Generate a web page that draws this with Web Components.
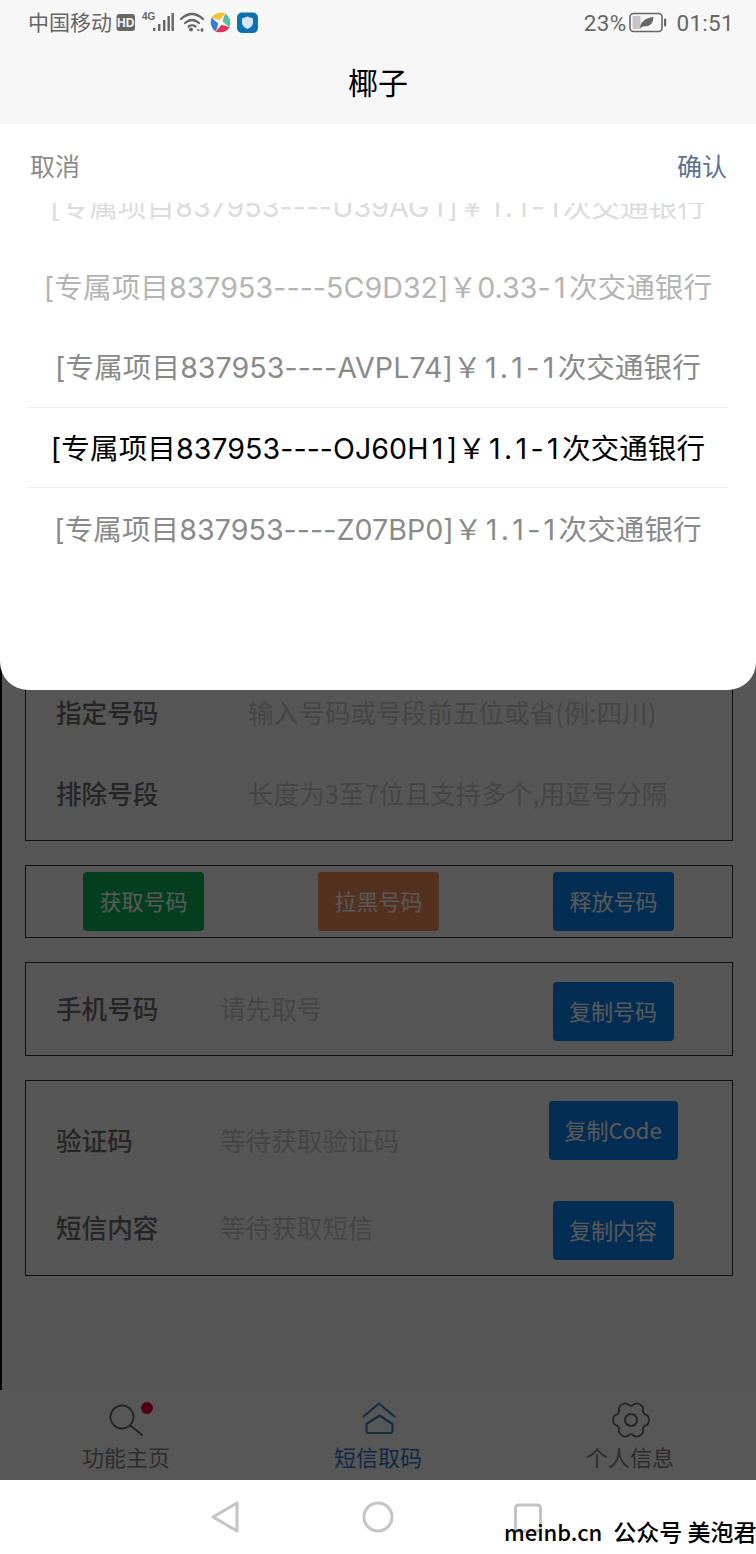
<!DOCTYPE html>
<html lang="zh">
<head>
<meta charset="utf-8">
<title>椰子</title>
<style>
  html, body { margin: 0; height: 100%; }
  body { font-family: "Noto Sans CJK SC", "Noto Sans", sans-serif; background: #fff; overflow: hidden; }
</style>
</head>
<body>
<app-shell>
  <status-bar></status-bar>
  <title-bar>椰子</title-bar>
  <main-area>
    <form-page>
      <form-card style="--card-height:688px;--card-justify:flex-end;--card-padding:0 0 7px">
        <form-row label="指定号码" value-col="192px" placeholder="输入号码或号段前五位或省(例:四川)"></form-row>
        <form-row label="排除号段" value-col="192px" placeholder="长度为3至7位且支持多个,用逗号分隔"></form-row>
      </form-card>
      <form-card style="--card-height:71px;--card-justify:center">
        <action-bar>
          <action-btn tone="green">获取号码</action-btn>
          <action-btn tone="orange">拉黑号码</action-btn>
          <action-btn tone="blue">释放号码</action-btn>
        </action-bar>
      </form-card>
      <form-card style="--card-height:73px;--card-padding:19px 0 0">
        <form-row label="手机号码" placeholder="请先取号" shift="-8"><action-btn tone="blue">复制号码</action-btn></form-row>
      </form-card>
      <form-card style="--card-height:174px;--card-padding:20px 0 0;--card-gap:41px">
        <form-row label="验证码" placeholder="等待获取验证码" shift="18"><action-btn tone="blue" wide>复制Code</action-btn></form-row>
        <form-row label="短信内容" placeholder="等待获取短信" shift="-8"><action-btn tone="blue">复制内容</action-btn></form-row>
      </form-card>
    </form-page>
    <tab-bar>
      <tab-item label="功能主页" icon="search" dot></tab-item>
      <tab-item label="短信取码" icon="home" active></tab-item>
      <tab-item label="个人信息" icon="gear"></tab-item>
    </tab-bar>
    <picker-sheet>
      <picker-row level="3">[专属项目837953----U39AG1]￥1.1-1次交通银行</picker-row>
      <picker-row level="2">[专属项目837953----5C9D32]￥0.33-1次交通银行</picker-row>
      <picker-row level="1">[专属项目837953----AVPL74]￥1.1-1次交通银行</picker-row>
      <picker-row level="0">[专属项目837953----OJ60H1]￥1.1-1次交通银行</picker-row>
      <picker-row level="1">[专属项目837953----Z07BP0]￥1.1-1次交通银行</picker-row>
    </picker-sheet>
  </main-area>
  <system-nav></system-nav>
</app-shell>

<script>
function define(name, css, html) {
  class El extends HTMLElement {
    constructor() {
      super();
      this.root = this.attachShadow({ mode: 'open' });
      this.root.innerHTML = `<style>${css}</style>${typeof html === 'function' ? html(this) : html}`;
    }
  }
  customElements.define(name, El);
}

// six flat-topped lobes, soft notches between them
function gearPath(cx, cy, outer, inner) {
  const pt = (deg, r) => {
    const a = deg * Math.PI / 180;
    return `${(cx + r * Math.cos(a)).toFixed(1)} ${(cy + r * Math.sin(a)).toFixed(1)}`;
  };
  let d = `M${pt(22, inner)}`;
  for (let i = 0; i < 6; i++) {
    const n = 30 + 60 * i;
    d += ` Q${pt(n, inner - 1.5)} ${pt(n + 8, inner)}`;
    d += ` C${pt(n + 16, outer * 1.1)} ${pt(n + 44, outer * 1.1)} ${pt(n + 52, inner)}`;
  }
  return d + ' Z';
}

const petal = 'M-7 -7.500 Q0 -12.500 7.500 -7 Q3.500 -5 0 -2.500 Q-4 -4 -7 -7.500 Z';

define('app-shell', `
  :host { display: flex; flex-direction: column; height: 1554px; width: 756px; overflow: hidden; position: relative; }
`, `<slot></slot>`);

define('status-bar', `
  :host { display: flex; align-items: center; justify-content: space-between; height: 50px; padding: 0 22px 4px 28px; box-sizing: border-box;
    background: #f7f7f7; color: #666; font-size: 21px; line-height: 24px; }
  .side { display: flex; align-items: center; }
  svg { display: block; }
  .carrier { position: relative; top: -2px; }
  .num { font-family: "Roboto", sans-serif; font-size: 22.5px; letter-spacing: .3px; }
`, `
  <div class="side">
    <span class="carrier">中国移动</span>
    <svg width="146" height="24" viewBox="0 0 146 24" style="margin-left:4px">
      <rect x="0.500" y="3" width="18.500" height="17" rx="3" fill="#666"/>
      <text x="9.700" y="16" font-size="12" font-weight="700" font-family="Liberation Sans" fill="#f7f7f7" text-anchor="middle">HD</text>
      <text x="26" y="9" font-size="10" font-weight="700" font-family="Liberation Sans" fill="#666">4G</text>
      <g fill="#666">
        <rect x="37" y="17" width="2.400" height="3"/>
        <rect x="42" y="13" width="2.400" height="7"/>
        <rect x="47" y="9" width="2.400" height="11"/>
        <rect x="51.500" y="5" width="2.400" height="15"/>
        <rect x="55.500" y="2" width="2.400" height="18"/>
      </g>
      <g fill="none" stroke="#666" stroke-width="2.200" stroke-linecap="round">
        <path d="M65 8 Q76 -2 87 8"/>
        <path d="M69 12 Q76 6 83 12"/>
        <path d="M72.500 15.500 Q76 13 79.500 15.500"/>
      </g>
      <circle cx="75" cy="18.500" r="2" fill="#666"/>
      <path d="M81 19h2.500M86 17v4M84.500 19h3" stroke="#666" stroke-width="1.500"/>
      <g transform="translate(104.500 11.500) rotate(-18)">
        <path d="${petal}" fill="#f2c230"/>
        <path transform="rotate(90)" d="${petal}" fill="#52c3a0"/>
        <path transform="rotate(180)" d="${petal}" fill="#e0305c"/>
        <path transform="rotate(270)" d="${petal}" fill="#2f7fd6"/>
      </g>
      <rect x="121" y="1.500" width="21" height="20.500" rx="5" fill="#0f70b6"/>
      <path d="M131.500 5.500 L137 7.500 V11.500 Q137 15.500 131.500 18 Q126 15.500 126 11.500 V7.500 Z" fill="#d3e7f5"/>
    </svg>
  </div>
  <div class="side">
    <span class="num">23%</span>
    <svg width="38" height="22" viewBox="0 0 38 22" style="margin:0 9px 0 3px">
      <rect x="1" y="1.500" width="32" height="18" rx="3.500" fill="none" stroke="#666" stroke-width="1.600"/>
      <rect x="3.500" y="4" width="8" height="13" fill="#c6c6c6"/>
      <path d="M11 16.500 Q11 7 24.500 5 Q24.500 15 14 14.500 Q12.500 15 11 16.500 Z" fill="#666"/>
      <rect x="35" y="6.500" width="2.200" height="8" rx="1" fill="#666"/>
    </svg>
    <span class="num">01:51</span>
  </div>
`);

define('title-bar', `
  :host { display: flex; align-items: center; justify-content: center; height: 74px; padding-bottom: 12px; box-sizing: border-box;
    background: #f7f7f7; color: #000; font-size: 30px; }
`, `<slot></slot>`);

define('main-area', `
  :host { display: flex; flex-direction: column; flex: 1; position: relative; min-height: 0; background: #f7f7f7; }
`, `<slot></slot>`);

define('form-page', `
  :host { display: flex; flex-direction: column; gap: 24px; height: 1266px; padding: 20px 23px 0 25px; box-sizing: border-box; border-left: 2px solid #111; }
  ::slotted(form-card) { margin-left: -2px; }
`, `<slot></slot>`);

define('form-card', `
  :host { display: flex; flex-direction: column; justify-content: var(--card-justify, flex-start); gap: var(--card-gap, 0);
    height: var(--card-height); padding: var(--card-padding, 0); border: 1px solid #333; box-sizing: content-box; }
`, `<slot></slot>`);

define('form-row', `
  :host { display: grid; grid-template-columns: 30px 164px 1fr; align-items: center; font-size: 25.6px; }
  :host(:not([has-btn])) { height: 81px; }
  .label { grid-column: 2; color: #6e6e6e; font-weight: 500; white-space: nowrap; }
  .value { color: #c6c6c6; white-space: nowrap; }
  .tail { display: flex; justify-content: center; width: 238px; }
  .wrap { display: flex; align-items: center; justify-content: space-between; }
`, (el) => {
  const shift = Number(el.getAttribute('shift') || 0);
  const offset = shift > 0 ? `margin-top:${shift}px` : shift < 0 ? `margin-bottom:${-shift}px` : '';
  const valueCol = el.getAttribute('value-col');
  const indent = valueCol ? `margin-left:${parseInt(valueCol) - 164}px` : '';
  if (el.children.length) el.setAttribute('has-btn', '');
  return `
    <span class="label" style="${offset}">${el.getAttribute('label')}</span>
    <div class="wrap">
      <span class="value" style="${offset};${indent}">${el.getAttribute('placeholder')}</span>
      <div class="tail"><slot></slot></div>
    </div>`;
});

define('action-bar', `
  :host { display: grid; grid-template-columns: repeat(3, 1fr); justify-items: center; margin-right: 1px; }
`, `<slot></slot>`);

define('action-btn', `
  :host { display: inline-flex; align-items: center; justify-content: center; width: 121px; height: 59px; padding-bottom: 4px; box-sizing: border-box;
    border-radius: 4px; font-size: 22px; color: #fff; background: #0c82f0; white-space: nowrap; }
  :host([wide]) { width: 129px; }
  :host([tone="green"]) { background: #09b45a; }
  :host([tone="orange"]) { background: #f08a58; }
  :host([tone="blue"]) { background: #0c82f0; }
`, `<slot></slot>`);

define('tab-bar', `
  :host { display: grid; grid-template-columns: repeat(3, 1fr); height: 90px; background: #fafafa; }
`, `<slot></slot>`);

const tabIcons = {
  search: `<circle cx="16" cy="17" r="11.500" fill="none" stroke="currentColor" stroke-width="1.800"/><path d="M24.500 25.500 L36 35" stroke="currentColor" stroke-width="2" stroke-linecap="round"/>`,
  home: `<path d="M5.500 16.500 L21 3.500 L36.500 16.500" fill="none" stroke="currentColor" stroke-width="2.200" stroke-linecap="round" stroke-linejoin="round"/><path d="M21.500 15.500 L34.500 24 V31 Q34.500 33 32.500 33 H10.500 Q8.500 33 8.500 31 V24 Z" fill="none" stroke="currentColor" stroke-width="2.200" stroke-linejoin="round"/>`,
  gear: `<path d="${gearPath(21, 20, 18, 15)}" fill="none" stroke="currentColor" stroke-width="1.800" stroke-linejoin="round"/><circle cx="21" cy="20" r="6" fill="none" stroke="currentColor" stroke-width="2"/>`
};

define('tab-item', `
  :host { display: flex; flex-direction: column; align-items: center; padding-top: 10px; color: #808080; font-size: 22px; }
  :host([active]) { color: #2a78c8; }
  svg { display: block; overflow: visible; }
  .icon { position: relative; width: 40px; height: 38px; }
  .icon svg { color: #686868; }
  :host([active]) .icon svg { color: #3d7fc0; }
  .label { line-height: 30px; margin-top: 3px; }
  .dot { position: absolute; top: 2px; left: 34.500px; width: 12px; height: 12px; border-radius: 50%; background: #e0002e; }
`, (el) => `
  <div class="icon">
    <svg width="40" height="38" viewBox="0 0 40 38">${tabIcons[el.getAttribute('icon')]}</svg>
    ${el.hasAttribute('dot') ? '<span class="dot"></span>' : ''}
  </div>
  <span class="label">${el.getAttribute('label')}</span>
`);

define('picker-sheet', `
  :host { display: block; position: absolute; inset: 0; background: rgba(0,0,0,.65); }
  .sheet { display: flex; flex-direction: column; height: 566px; background: #fff; border-radius: 0 0 28px 28px; }
  .head { display: flex; justify-content: space-between; align-items: center; height: 79px; padding: 2px 29px 0 30px; box-sizing: border-box; font-size: 25px; color: #8c8c8c; }
  .ok { color: #5a7191; }
  .wheel { flex: none; height: 420px; overflow: hidden; }
  .track { margin-top: -38px; padding: 0 28px; }
`, `
  <div class="sheet">
    <div class="head"><span>取消</span><span class="ok">确认</span></div>
    <div class="wheel"><div class="track"><slot></slot></div></div>
  </div>
`);

// the 1 is as wide as the other digits in the reference, Inter's is narrow
define('picker-row', `
  :host { display: block; height: 80.700px; line-height: 84px; text-align: center; box-sizing: border-box;
    font-family: "Inter", "Noto Sans CJK SC", sans-serif; font-size: 28.600px; letter-spacing: .05px;
    white-space: nowrap; color: #000; }
  :host([level="1"]) { color: #8a8a8a; }
  :host([level="2"]) { color: #b4b4b4; }
  :host([level="3"]) { color: #dcdcdc; }
  :host([level="0"]) { border-top: 1px solid #eee; border-bottom: 1px solid #eee; line-height: 82px; }
  ::slotted(i) { font-style: normal; padding: 0 3.250px; }
`, (el) => {
  el.innerHTML = el.textContent.replace(/1/g, '<i>1</i>');
  return `<slot></slot>`;
});

define('system-nav', `
  :host { display: flex; align-items: center; justify-content: center; gap: 122px; height: 74px; background: #fff; position: relative; }
  svg { display: block; overflow: visible; }
  .mark { position: absolute; left: 504px; top: 34px; display: flex; align-items: baseline; gap: 11px; font-size: 22px; font-weight: 500; color: #000; white-space: nowrap; }
  .mark span + span { font-size: 23px; }
`, `
  <svg width="30" height="32" viewBox="0 0 30 32"><path d="M27 2 V30 L3 16 Z" fill="none" stroke="#c4c4c4" stroke-width="3" stroke-linejoin="round"/></svg>
  <svg width="32" height="32" viewBox="0 0 32 32"><circle cx="16" cy="16" r="14" fill="none" stroke="#c4c4c4" stroke-width="3"/></svg>
  <svg width="30" height="30" viewBox="0 0 30 30"><rect x="-0.500" y="3" width="25" height="26" rx="3" fill="none" stroke="#c4c4c4" stroke-width="3"/></svg>
  <div class="mark"><span>meinb.cn</span><span>公众号 美泡君</span></div>
`);
</script>
</body>
</html>
